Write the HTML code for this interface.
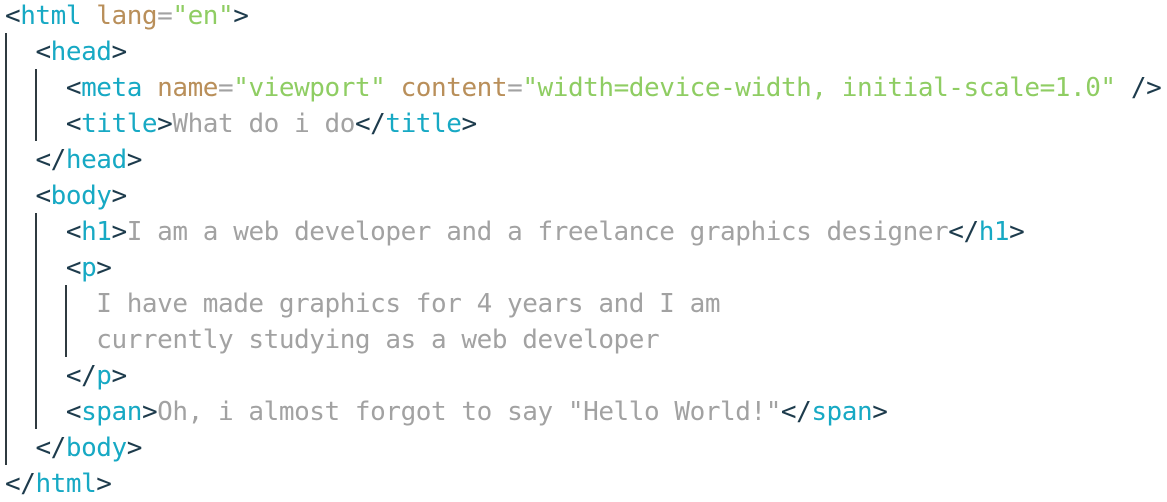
<!DOCTYPE html>
<html><head><style>
body{margin:0;width:1167px;height:500px;background:#fff;position:relative;overflow:hidden;font-family:"DejaVu Sans Mono","Liberation Mono",monospace;}
.l{position:absolute;left:5px;height:36px;line-height:36px;font-size:26px;white-space:pre;letter-spacing:-0.44px;}
.b{color:#1d3b4c}.t{color:#17a9c4}.a{color:#b98f5a}.s{color:#8fcd63}.x{color:#a2a2a2}
.g{position:absolute;width:2px;background:#2f3a40}
</style></head><body>
<div class="g" style="left:5px;top:33px;height:432px"></div>
<div class="g" style="left:35px;top:69px;height:72px"></div>
<div class="g" style="left:35px;top:213px;height:216px"></div>
<div class="g" style="left:65px;top:285px;height:72px"></div>
<div class="l" style="top:-2px"><span class="b">&lt;</span><span class="t">html</span> <span class="a">lang</span><span class="x">=</span><span class="s">"en"</span><span class="b">&gt;</span></div>
<div class="l" style="top:34px">  <span class="b">&lt;</span><span class="t">head</span><span class="b">&gt;</span></div>
<div class="l" style="top:70px">    <span class="b">&lt;</span><span class="t">meta</span> <span class="a">name</span><span class="x">=</span><span class="s">"viewport"</span> <span class="a">content</span><span class="x">=</span><span class="s">"width=device-width, initial-scale=1.0"</span> <span class="b">/&gt;</span></div>
<div class="l" style="top:106px">    <span class="b">&lt;</span><span class="t">title</span><span class="b">&gt;</span><span class="x">What do i do</span><span class="b">&lt;/</span><span class="t">title</span><span class="b">&gt;</span></div>
<div class="l" style="top:142px">  <span class="b">&lt;/</span><span class="t">head</span><span class="b">&gt;</span></div>
<div class="l" style="top:178px">  <span class="b">&lt;</span><span class="t">body</span><span class="b">&gt;</span></div>
<div class="l" style="top:214px">    <span class="b">&lt;</span><span class="t">h1</span><span class="b">&gt;</span><span class="x">I am a web developer and a freelance graphics designer</span><span class="b">&lt;/</span><span class="t">h1</span><span class="b">&gt;</span></div>
<div class="l" style="top:250px">    <span class="b">&lt;</span><span class="t">p</span><span class="b">&gt;</span></div>
<div class="l" style="top:286px">      <span class="x">I have made graphics for 4 years and I am</span></div>
<div class="l" style="top:322px">      <span class="x">currently studying as a web developer</span></div>
<div class="l" style="top:358px">    <span class="b">&lt;/</span><span class="t">p</span><span class="b">&gt;</span></div>
<div class="l" style="top:394px">    <span class="b">&lt;</span><span class="t">span</span><span class="b">&gt;</span><span class="x">Oh, i almost forgot to say "Hello World!"</span><span class="b">&lt;/</span><span class="t">span</span><span class="b">&gt;</span></div>
<div class="l" style="top:430px">  <span class="b">&lt;/</span><span class="t">body</span><span class="b">&gt;</span></div>
<div class="l" style="top:466px"><span class="b">&lt;/</span><span class="t">html</span><span class="b">&gt;</span></div>
</body></html>
